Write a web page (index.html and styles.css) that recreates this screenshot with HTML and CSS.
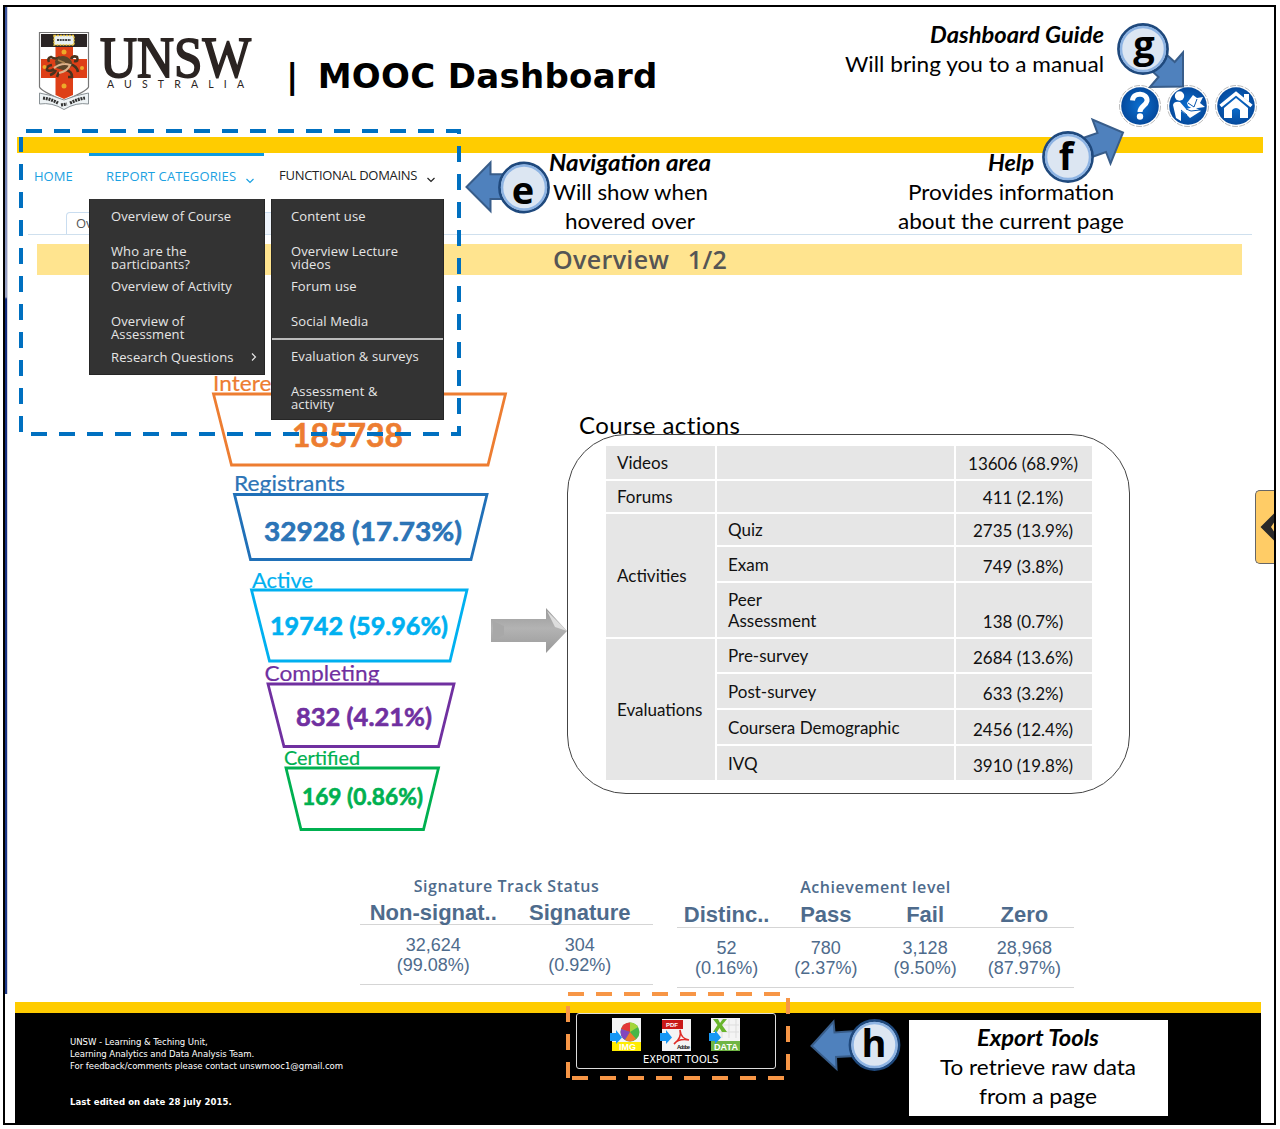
FILE: index.html
```html
<!DOCTYPE html>
<html lang="en">
<head>
<meta charset="utf-8">
<title>UNSW MOOC Dashboard</title>
<link rel="stylesheet" href="styles.css">
</head>
<body>
<main class="frame">
  <header class="header">
    <svg class="logo" viewBox="36 28 220 84" width="220" height="84">
      <path d="M39.500 32.500H88.500V87Q87 91 64 101Q41 91 39.500 87Z" fill="#fff" stroke="#777" stroke-width="1.200"/>
      <path d="M41 34H87V47H41Z" fill="#2a2424"/>
      <path d="M55.500 47H73V95L64 99L55.500 95ZM41 59H87V78H41Z" fill="#de3f17"/>
      <path d="M54 35.500H74V45H54Z" fill="#e9f0f2" stroke="#e9c33b" stroke-width="1.500" stroke-dasharray="2 1"/>
      <path d="M57 40H71" stroke="#444" stroke-width="2" stroke-dasharray="2 .7"/>
      <g fill="none" stroke="#49331e" stroke-width="2.600">
        <path d="M49 62Q47 58 51 57Q56 60 60 57M52 65Q46 66 47 70Q51 72 54 69M56 70Q54 74 50 75M66 70Q72 71 72 77L68 77M70 64Q77 66 78 72M74 61Q79 62 77 57Q73 55 71 59M59 72L57 77"/>
      </g>
      <path d="M55 61Q60 54 67 57Q73 60 72 66L66 71L56 68Z" fill="#5c4529"/>
      <path d="M54 68Q62 62 70 65Q68 71 59 73" fill="none" stroke="#ddb28a" stroke-width="2.200"/>
      <path d="M58 60L65 63" stroke="#a9814d" stroke-width="1.500"/>
      <g fill="#edaa2a"><circle cx="64" cy="52" r="2.500"/><circle cx="44.500" cy="67" r="2"/><circle cx="82" cy="68" r="2"/><circle cx="64" cy="86" r="2.500"/></g>
      <path d="M39.500 93Q52 95 64 100Q76 95 88.500 93V104Q76 102 64 109.500Q52 102 39.500 104Z" fill="#eef3f5" stroke="#8a9296"/>
      <path d="M43 98Q51 99 58 103M61 105L67 104M70 103Q78 99 85 98" fill="none" stroke="#333" stroke-width="3.200" stroke-dasharray="2 .8"/>
      <text class="logo-name" x="100" y="77" textLength="151" lengthAdjust="spacingAndGlyphs">UNSW</text>
      <text class="logo-sub" x="107" y="88" textLength="137">AUSTRALIA</text>
    </svg>
    <h1 class="title"><span class="bar">|</span>MOOC Dashboard</h1>
    <div class="tools">
      <svg width="44" height="44" viewBox="-22 -22 44 44">
        <defs><radialGradient id="blue"><stop offset="0" stop-color="#0b6fd0"/><stop offset="1" stop-color="#054a9d"/></radialGradient></defs>
        <circle class="ring" r="20.500"/><circle r="18.800" fill="url(#blue)"/>
        <path d="M-7.500-5.500C-7-14.500 8-13.500 7-5C6 0 0 0 0 6" fill="none" stroke="#fff" stroke-width="5"/><circle cy="10.500" r="3.200" fill="#fff"/>
      </svg>
      <svg width="44" height="44" viewBox="-22 -22 44 44">
        <circle class="ring" r="20.500"/><circle r="18.800" fill="url(#blue)"/>
        <g fill="#fff"><circle cx="-8.500" cy="-10" r="4.700"/><path d="M-15-1Q-14-5-8-4L-2 3L6 1L13 5L2 12L-1 9L-7 5V15L-12 12Z"/><path d="M-1-3L5-11L9-8L15-9L12-3L17 1L10 2L5 3L0 0Z"/></g>
        <path d="M0-3L6 1L9-7M-2 3L3 5L12 4M-7 4L-1 9" fill="none" stroke="#0957ad"/>
      </svg>
      <svg width="44" height="44" viewBox="-22 -22 44 44">
        <circle class="ring" r="20.500"/><circle r="18.800" fill="url(#blue)"/>
        <path d="M-15.500 0L0-12.500L15.500 0" fill="none" stroke="#fff" stroke-width="3.500"/>
        <path d="M8-12H13V-4L8-8ZM-12 2L0-8L12 2V12H4V4Q0 0-4 4V12H-12Z" fill="#fff"/>
      </svg>
    </div>
  </header>
  <div class="yellow-bar"></div>

  <nav class="nav">
    <a class="nav-item home">HOME</a>
    <div class="nav-item reports"><span>REPORT CATEGORIES</span>
      <svg class="chev" width="8" height="6" viewBox="0 0 8 6"><path d="M.5 1L4 4.500L7.500 1"/></svg>
      <ul class="menu menu-left">
        <li>Overview of Course</li>
        <li>Who are the<br>participants?</li>
        <li>Overview of Activity</li>
        <li>Overview of<br>Assessment</li>
        <li class="sub">Research Questions <svg width="6" height="8" viewBox="0 0 6 8"><path d="M1 .5L4.500 4L1 7.500"/></svg></li>
      </ul>
    </div>
    <div class="nav-item domains"><span>FUNCTIONAL DOMAINS</span>
      <svg class="chev" width="8" height="6" viewBox="0 0 8 6"><path d="M.5 1L4 4.500L7.500 1"/></svg>
      <ul class="menu menu-right">
        <li>Content use</li>
        <li>Overview Lecture<br>videos</li>
        <li>Forum use</li>
        <li>Social Media</li>
        <li class="divided">Evaluation &amp; surveys</li>
        <li class="last">Assessment &amp;<br>activity</li>
      </ul>
    </div>
  </nav>

  <div class="tabs"><span class="tab">Overview</span><span class="tab idle"></span></div>
  <h2 class="band">Overview&nbsp; 1/2</h2>

  <section class="dashboard">
    <svg class="funnel" viewBox="205 365 362 475" width="362" height="475">
      <defs><linearGradient id="grey" x2="0" y2="1"><stop offset="0" stop-color="#999"/><stop offset=".45" stop-color="#b3b3b3"/><stop offset="1" stop-color="#999"/></linearGradient></defs>
      <g fill="#ed7d31" stroke="#ed7d31">
        <text class="label" x="213" y="391" textLength="101" lengthAdjust="spacingAndGlyphs">Interested</text>
        <path class="cup" d="M213.500 394H505.500L488 465H231.500Z"/>
        <text class="value" x="292" y="446.500" font-size="32" textLength="111" lengthAdjust="spacingAndGlyphs">185738</text>
      </g>
      <g fill="#2e75b6" stroke="#2070b8">
        <text class="label" x="234" y="490.500" textLength="111" lengthAdjust="spacingAndGlyphs">Registrants</text>
        <path class="cup" d="M234.500 494.500H487L471 559.500H250.500Z"/>
        <text class="value" x="264" y="541" font-size="27" textLength="198" lengthAdjust="spacingAndGlyphs">32928 (17.73%)</text>
      </g>
      <g fill="#00b0f0" stroke="#00b0f0">
        <text class="label" x="252" y="588" textLength="61" lengthAdjust="spacingAndGlyphs">Active</text>
        <path class="cup" d="M251.500 590H467L450 661H269.500Z"/>
        <text class="value" x="270" y="634.500" font-size="25" textLength="178" lengthAdjust="spacingAndGlyphs">19742 (59.96%)</text>
      </g>
      <g fill="#7030a0" stroke="#7030a0">
        <text class="label" x="264.500" y="680.500" textLength="115" lengthAdjust="spacingAndGlyphs">Completing</text>
        <path class="cup" d="M268 684H454L438.500 746.500H284Z"/>
        <text class="value" x="296" y="726" font-size="25" textLength="136" lengthAdjust="spacingAndGlyphs">832 (4.21%)</text>
      </g>
      <g fill="#00b050" stroke="#00b050">
        <text class="label small" x="284" y="764.500" textLength="76" lengthAdjust="spacingAndGlyphs">Certified</text>
        <path class="cup" d="M286 768H438.500L423.500 829.500H301Z"/>
        <text class="value" x="302" y="804.500" font-size="22" textLength="121" lengthAdjust="spacingAndGlyphs">169 (0.86%)</text>
      </g>
      <path d="M491 619H546V608L567 631L546 653V642H491Z" fill="url(#grey)"/>
      <path d="M547 611L567 631L555 627Z" fill="#ddd"/><path d="M493 621L504 626V635L493 640Z" fill="#a8a8a8"/>
    </svg>
    <section class="actions">
      <h3>Course actions</h3>
      <div class="panel">
        <div class="cells">
          <div>Videos</div><div></div><div class="num r1">13606 (68.9%)</div>
          <div>Forums</div><div></div><div class="num r1">411 (2.1%)</div>
          <div class="span3">Activities</div><div>Quiz</div><div class="num r1">2735 (13.9%)</div>
          <div>Exam</div><div class="num">749 (3.8%)</div>
          <div>Peer<br>Assessment</div><div class="num low">138 (0.7%)</div>
          <div class="span4">Evaluations</div><div>Pre-survey</div><div class="num">2684 (13.6%)</div>
          <div>Post-survey</div><div class="num">633 (3.2%)</div>
          <div>Coursera Demographic</div><div class="num">2456 (12.4%)</div>
          <div>IVQ</div><div class="num">3910 (19.8%)</div>
        </div>
      </div>
    </section>
  </section>

  <section class="stats">
    <div class="stat track">
      <h4>Signature Track Status</h4>
      <div class="row head"><span>Non-signat..</span><span>Signature</span></div>
      <div class="row body"><span>32,624<br>(99.08%)</span><span>304<br>(0.92%)</span></div>
    </div>
    <div class="stat level">
      <h4>Achievement level</h4>
      <div class="row head"><span>Distinc..</span><span>Pass</span><span>Fail</span><span>Zero</span></div>
      <div class="row body"><span>52<br>(0.16%)</span><span>780<br>(2.37%)</span><span>3,128<br>(9.50%)</span><span>28,968<br>(87.97%)</span></div>
    </div>
  </section>

  <footer class="footer">
    <address class="contact">UNSW - Learning &amp; Teching Unit,<br>Learning Analytics and Data Analysis Team.<br>For feedback/comments please contact unswmooc1@gmail.com<strong>Last edited on date 28 july 2015.</strong></address>
    <div class="export">
      <div class="export-icons">
        <svg width="32" height="34" viewBox="-2 0 32 34">
          <path d="M0 0H29V33H0Z" fill="#f4f4f4"/><path d="M0 24H29V33H0Z" fill="#ffec00"/>
          <circle cx="18" cy="14" r="9.500" fill="#48b648"/><path d="M18 14V4.500A9.500 9.500 0 0 0 9 11Z" fill="#e33636"/><path d="M18 14V4.500A9.500 9.500 0 0 1 26 9Z" fill="#a5d53b"/><path d="M18 14L9 11A9.500 9.500 0 0 0 13 22Z" fill="#8346bd"/><path d="M18 14L13 22A9.500 9.500 0 0 0 24 21Z" fill="#f07b2e"/>
          <path class="go" d="M-2 15H4V12L10 19.500L4 26V23H-2Z"/><text class="tag" x="7" y="31.500" textLength="17">IMG</text>
        </svg>
        <svg width="32" height="34" viewBox="-2 0 32 34">
          <path d="M0 1H29V33H0Z" fill="#f4f4f4"/><path d="M0 2H21V11H0Z" fill="#c91818"/><text class="pdf" x="4" y="9" textLength="12">PDF</text>
          <path d="M12 26Q20 20 18 12Q19 21 27 22Q17 20 12 26" fill="none" stroke="#e02b25" stroke-width="1.600"/>
          <path class="go" d="M-2 15H4V12L10 19.500L4 26V23H-2Z"/><text class="adobe" x="15" y="30.500" textLength="13">Adobe</text>
        </svg>
        <svg width="32" height="34" viewBox="-2 0 32 34">
          <path d="M0 0H29V33H0Z" fill="#f4f4f4"/><path d="M0 23H29V33H0Z" fill="#6fb544"/><path d="M11 1V20M18 1V20M25 1V20M8 7H28M8 14H28" stroke="#ddd"/>
          <path d="M2 1H7L9 5L12 1H16L11 7L16 14H11L8.500 10L6 14H2L6.500 7Z" fill="#69b52c"/>
          <path class="go" d="M-2 15H4V12L10 19.500L4 26V23H-2Z"/><text class="tag" x="3" y="31.500" textLength="24">DATA</text>
        </svg>
      </div>
      <span class="export-label">EXPORT TOOLS</span>
    </div>
  </footer>
</main>

<div class="edge"></div>
<div class="side-tab"><svg width="19" height="73" viewBox="0 0 19 73"><path d="M4.500 36L19 21.500V30L15 36L19 42V50.500Z" fill="#292929"/></svg></div>

<svg class="notes" viewBox="0 0 1280 1129" width="1280" height="1129">
  <path class="dash" stroke="#0070c0" d="M26 131H459V434H21V137"/>
  <path class="dash" stroke="#f79646" d="M568 994H788V1078H571M568 1006V1078"/>
  <g class="arrow">
    <path d="M1167 55L1174.700 62L1183 52.500V86.500L1150 87L1158.500 77L1151 70Z"/>
    <path d="M466.500 187L490.500 162.500V174.300H510V199H490.500V211Z"/>
    <path d="M1083 138L1097.500 133L1092.500 119.500L1123 132.500L1110.500 163.500L1106 152L1092 157Z"/>
    <path d="M811.500 1046L833.500 1021.500L834.500 1032.500L855 1031V1056L836 1057L836.500 1069Z"/>
  </g>
  <g class="ball">
    <circle cx="1143" cy="49" r="24.500"/><circle cx="524" cy="187.500" r="24.500"/><circle cx="1068" cy="157" r="24.500"/><circle cx="874.500" cy="1045" r="24.500"/>
  </g>
  <g class="halo">
    <circle cx="1143" cy="49" r="22"/><circle cx="524" cy="187.500" r="22"/><circle cx="1068" cy="157" r="22"/><circle cx="874.500" cy="1045" r="22"/>
  </g>
  <g class="letter">
    <text x="1144" y="58">g</text><text x="523" y="204">e</text><text x="1066" y="170">f</text><text x="874" y="1057">h</text>
  </g>
  <path d="M909 1020H1168V1116H909Z" fill="#fff"/>
  <g class="note strong">
    <text x="930" y="43" textLength="174" lengthAdjust="spacingAndGlyphs">Dashboard Guide</text>
    <text x="549" y="171" textLength="162" lengthAdjust="spacingAndGlyphs">Navigation area</text>
    <text x="988" y="171" textLength="46" lengthAdjust="spacingAndGlyphs">Help</text>
    <text x="977" y="1046" textLength="122" lengthAdjust="spacingAndGlyphs">Export Tools</text>
  </g>
  <g class="note">
    <text x="845" y="72" textLength="259" lengthAdjust="spacingAndGlyphs">Will bring you to a manual</text>
    <text x="553" y="200" textLength="155" lengthAdjust="spacingAndGlyphs">Will show when</text>
    <text x="565" y="229" textLength="130" lengthAdjust="spacingAndGlyphs">hovered over</text>
    <text x="908" y="200" textLength="206" lengthAdjust="spacingAndGlyphs">Provides information</text>
    <text x="898" y="229" textLength="226" lengthAdjust="spacingAndGlyphs">about the current page</text>
    <text x="940" y="1075" textLength="196" lengthAdjust="spacingAndGlyphs">To retrieve raw data</text>
    <text x="979" y="1104" textLength="118" lengthAdjust="spacingAndGlyphs">from a page</text>
  </g>
</svg>
</body>
</html>
```
FILE: styles.css
```css
* { box-sizing: border-box; }
body { margin: 0; width: 1280px; height: 1129px; position: relative; overflow: hidden; background: #fff; font-family: "Open Sans", sans-serif; font-variant-ligatures: none; }
h1, h2, h3, h4, ul { margin: 0; padding: 0; }
.frame { display: flex; flex-direction: column; margin: 0 0 0 3px; width: 1273px; height: 1120px; border: 2px solid #000; position: relative; top: 5px; }

.header { display: flex; height: 130px; padding-left: 31px; flex: none; }
.logo { margin-top: 21px; }
.logo-name { font: 57px "Liberation Serif", serif; fill: #2b2422; stroke: #2b2422; stroke-width: 1.800; }
.logo-sub { font: 10.500px Lato, sans-serif; fill: #2b2422; }
.title { margin: 48px 0 0 30px; font: bold 34px/42px "DejaVu Sans", sans-serif; letter-spacing: .3px; white-space: nowrap; }
.title .bar { margin-right: 19px; }
.tools { display: flex; gap: 4px; margin: 77px 16px 0 auto; }
.ring { fill: #fff; stroke: #bbb; stroke-width: 1; stroke-dasharray: 6 1.500; }
.yellow-bar { height: 16px; margin: 0 11px 0 12px; background: #fc0; flex: none; }

.nav { display: flex; height: 46px; padding-left: 12px; flex: none; font-size: 13px; line-height: 46px; white-space: nowrap; position: relative; z-index: 2; }
.nav-item { position: relative; color: #222; }
.home { width: 72px; padding-left: 17px; color: #1ba1e2; }
.reports { width: 175px; padding-left: 17px; color: #1ba1e2; box-shadow: inset 0 3px #0e9be0; }
.reports > span { letter-spacing: .12px; }
.domains { margin-left: 7px; padding-left: 8px; width: 173px; line-height: 45px; }
.domains > span { letter-spacing: -.28px; }
.chev { margin-left: 6px; vertical-align: -3px; fill: none; stroke: currentColor; stroke-width: 1.200; }
.menu { position: absolute; top: 46px; left: 0; list-style: none; background: #333; color: #e6e6e6; border: 1px solid #262626; border-top: 0; line-height: 13px; letter-spacing: .12px; }
.menu-left { width: 176px; height: 176px; }
.menu-right { width: 173px; height: 221px; }
.menu li { height: 35px; padding: 11px 0 0 21px; overflow: hidden; }
.menu-right li { padding-left: 19px; }
.menu .sub { display: flex; gap: 17px; align-items: flex-start; padding-top: 12px; }
.sub svg { margin-top: 2px; fill: none; stroke: #e6e6e6; stroke-width: 1.200; }
.menu .divided { box-shadow: inset 0 2px #bbb; margin-top: -1px; height: 36px; padding-top: 12px; }
.menu .last { overflow: visible; }

.tabs { display: flex; flex: none; height: 23px; margin: 13px 22px 0 23px; padding-left: 38px; border-bottom: 1px solid #cfe0ee; }
.tab { width: 160px; height: 22px; border: 1px solid #c9ddf0; border-bottom: 0; border-radius: 4px 0 0; padding-left: 9px; font-size: 13px; line-height: 20px; color: #555; }
.tab.idle { width: 90px; background: #eef4fb; }
.band { flex: none; height: 31px; margin: 9px 32px 0; padding-left: 516px; background: #ffe48f; color: #555; font: 600 25px/31px "Open Sans", sans-serif; white-space: pre; letter-spacing: .35px; word-spacing: 2.500px; }

.dashboard { display: flex; flex: none; height: 590px; padding-left: 200px; align-items: flex-start; }
.funnel { margin-top: 90px; flex: none; }
.label { font: 22px Lato, sans-serif; stroke-width: .2; }
.label.small { font-size: 20px; }
.value { font-family: Lato, sans-serif; font-weight: 700; stroke-width: .6; }
.cup { fill: #fff; stroke-width: 2.800; }
.actions { width: 563px; margin-top: 135px; }
.actions h3 { margin: 0 0 -6px 12px; font: 24px/30px Lato, sans-serif; letter-spacing: .4px; }
.panel { position: relative; height: 360px; border: 1.500px solid #444; border-radius: 59px; padding: 11px 0 0 38px; }
.cells { display: grid; width: 486px; grid-template: 33px 31px 31px 34px 54px 33px 34px 34px 34px / 109px 237px 136px; gap: 2px; font: 17px/21px Lato, sans-serif; color: #111; }
.cells > div { background: #e6e6e6; padding: 0 10px 0 11px; display: flex; align-items: center; white-space: nowrap; }
.cells .num { justify-content: center; padding: 4px 2px 0 0; }
.cells .r1 { padding-top: 1px; }
.cells .low { align-items: flex-end; padding-bottom: 5px; }
.span3 { grid-row: span 3; }
.span4 { grid-row: span 4; }

.stats { display: flex; flex: none; height: 137px; padding-left: 355px; gap: 24px; color: #4e6b8c; font-family: "Liberation Sans", sans-serif; text-align: center; }
.stat h4 { font: 600 16px/24px "Open Sans", sans-serif; letter-spacing: .55px; }
.track { width: 293px; padding-top: 9px; }
.level { width: 397px; padding-top: 10px; }
.row { display: flex; border-bottom: 1px solid #d5d5d5; }
.head { font-size: 22px; font-weight: bold; height: 27px; line-height: 30px; }
.level .head { height: 29px; line-height: 32px; }
.body { height: 60px; padding-top: 10px; font-size: 18px; line-height: 20px; }
.track span { width: 50%; }
.level span { width: 25%; }

.footer { flex: none; height: 121px; margin: 0 13px 0 10px; background: #000; border-top: 11px solid #fc0; display: flex; color: #fff; font-family: "DejaVu Sans Condensed", "DejaVu Sans", sans-serif; font-stretch: condensed; }
.contact { width: 561px; padding: 23px 0 0 55px; font-size: 9.500px; line-height: 12px; font-style: normal; white-space: nowrap; letter-spacing: -.05px; }
.contact strong { display: block; margin-top: 24px; letter-spacing: .08px; }
.export { width: 200px; height: 56px; border: 1px solid #ddd; border-radius: 3px; background: #000; padding: 4px 0 0 33px; }
.export-icons { display: flex; gap: 17.500px; height: 34px; }
.export-label { display: block; margin: 1px 0 0 33px; font-size: 11px; line-height: 13px; white-space: nowrap; }
.go { fill: #1697f5; }
.tag { font: bold 9px "Liberation Sans", sans-serif; fill: #fff; }
.pdf { font: bold 6px "Liberation Sans", sans-serif; fill: #fff; }
.adobe { font: bold 5.500px "Liberation Sans", sans-serif; fill: #222; }

.edge { position: absolute; left: 5px; top: 7px; width: 3px; height: 987px; background: linear-gradient(90deg, transparent 66%, #d5d5e2 66%), linear-gradient(#3b55a0, #9aa3c4 290px, #142c7c 292px, #1e3a8a); }
.side-tab { position: absolute; left: 1255px; top: 490px; width: 19px; height: 74px; background: #fc6; border: 1px solid #666; border-right: 0; border-radius: 5px 0 0 5px; overflow: hidden; }
.side-tab svg { display: block; }
.notes { position: absolute; left: 0; top: 0; z-index: 3; pointer-events: none; }
.dash { fill: none; stroke-width: 4; stroke-dasharray: 16 12; }
.arrow { fill: #4f81bd; stroke: #385d8a; stroke-width: 2; }
.ball { fill: #dce6f2; stroke: #1f497d; stroke-width: 2.800; }
.halo { fill: none; stroke: #8eb4e3; stroke-width: 2.500; }
.letter { font: bold 38px "Open Sans", sans-serif; text-anchor: middle; }
.note { font: 22px Lato, sans-serif; }
.strong { font-weight: 700; font-style: italic; }
```
